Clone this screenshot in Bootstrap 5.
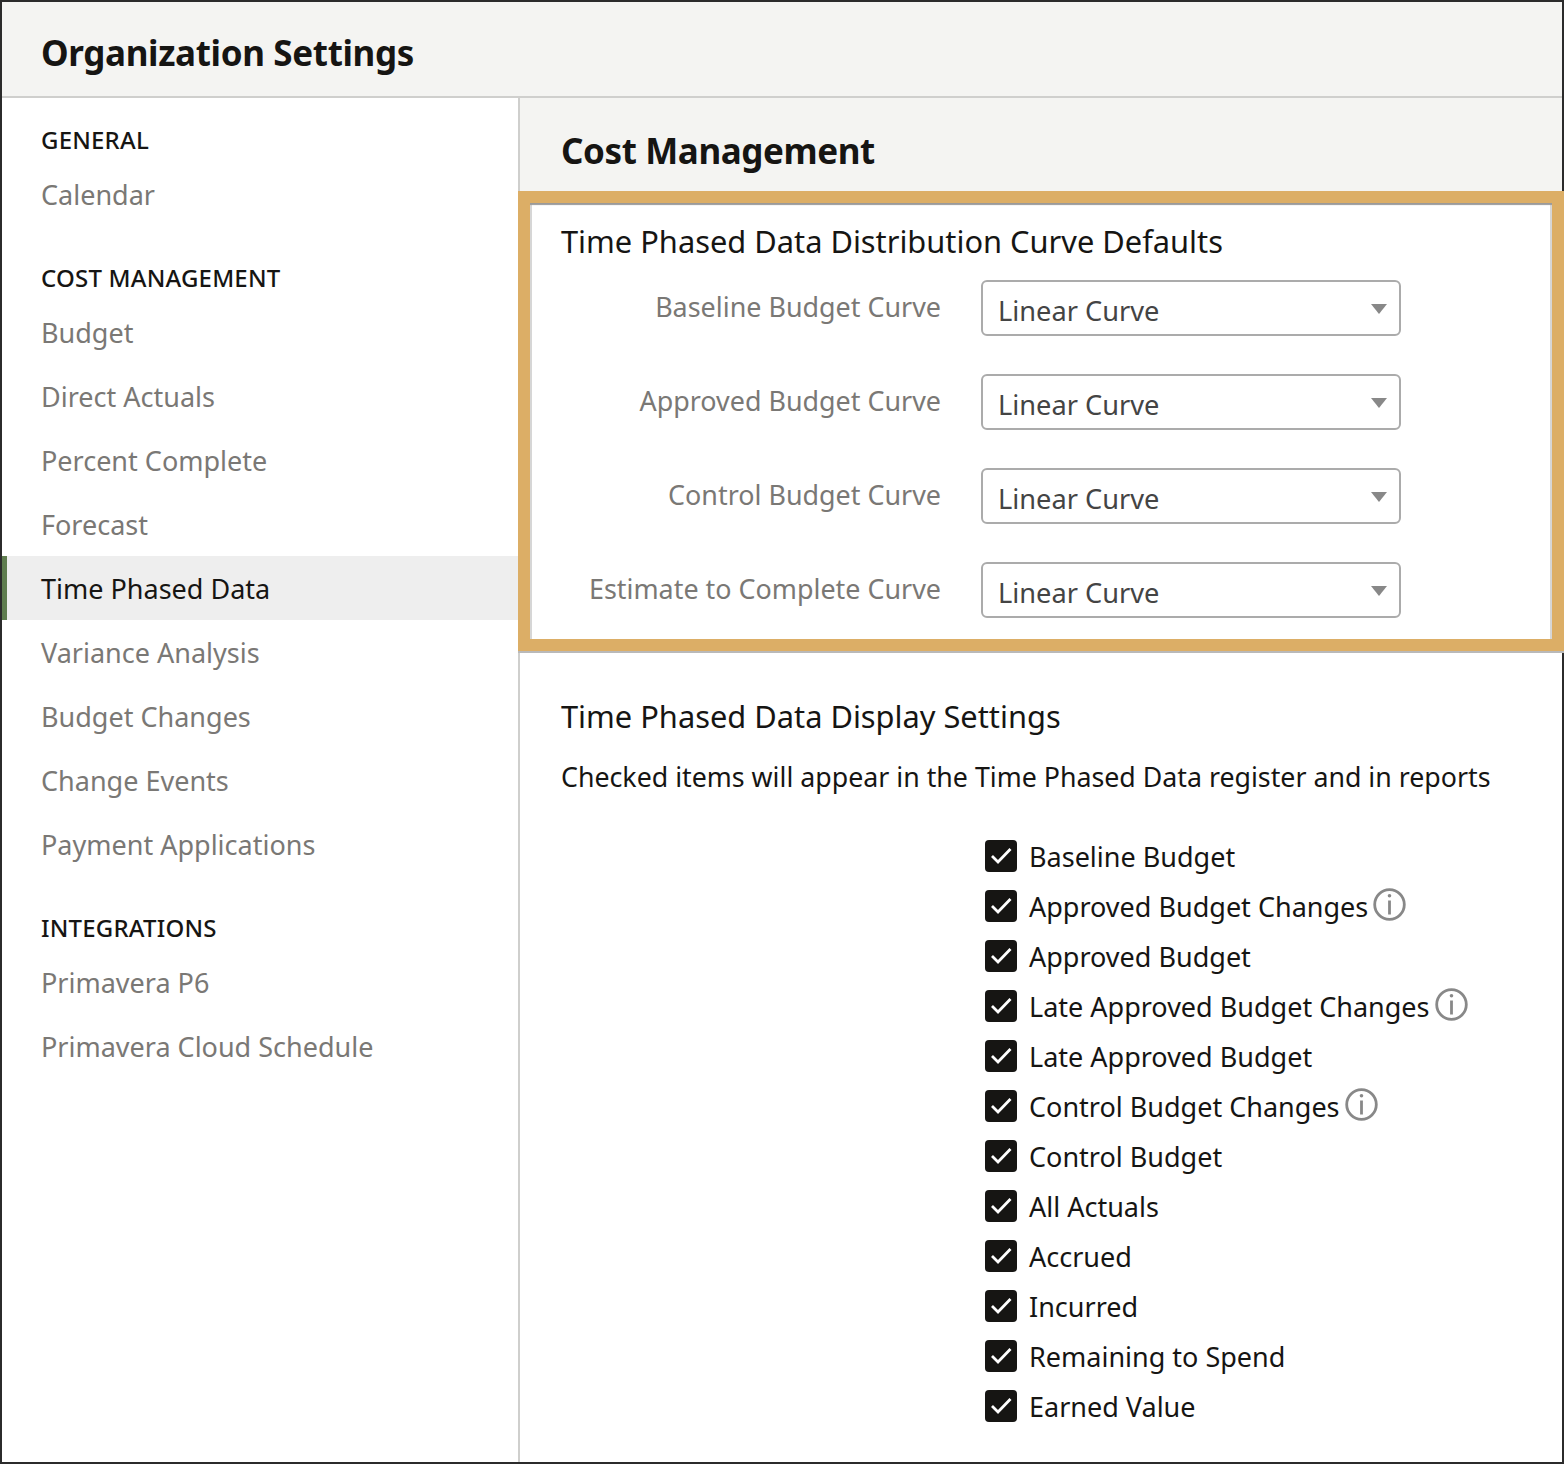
<!DOCTYPE html>
<html>
<head>
    <title>Organization Settings</title>
    <link href="https://cdn.jsdelivr.net/npm/bootstrap@5.3.0/dist/css/bootstrap.min.css" rel="stylesheet">
    <style>
        body { background: #fff; font-family: "Noto Sans", sans-serif; color: #161513; }
        .org-frame { width: 1564px; height: 1464px; border: 2px solid #2b2b2b; }
        .org-header { height: 96px; background: #f4f4f2; border-bottom: 2px solid #cfcfcd; padding: 8px 0 0 39px; }
        .org-title { font-size: 35px; font-weight: 700; letter-spacing: -0.35px; margin: 0; }
        .side-col { width: 516px; padding-top: 26px; }
        .side-label { font-size: 24px; font-weight: 500; letter-spacing: 0.2px; height: 32px; line-height: 32px; padding-left: 39px; margin-bottom: 6px; }
        .side-group { margin-bottom: 36px; }
        .side-link { display: block; height: 64px; line-height: 66px; padding-left: 39px; font-size: 27px; color: #7a7875; text-decoration: none; }
        .side-link.is-active { background: #eeeeee; color: #161513; border-left: 5px solid #5f7d4f; padding-left: 34px; }
        .main-col { border-left: 2px solid #cfcfcd; min-width: 0; }
        .main-head { background: #f4f4f2; height: 93px; padding: 12px 0 0 41px; }
        .main-title { font-size: 35px; font-weight: 700; letter-spacing: -0.4px; margin: 0; }
        .curve-box { margin: 0 -2px; height: 460px; border: 12px solid #dcae66; background: #fff; box-shadow: inset 0 3px 1px -1px #9a9a9a, inset 2px 0 0 #d6d6d6, inset -2px 0 0 #d6d6d6, 0 2px 0 #b9b9b9; padding: 18px 0 0 31px; }
        .sec-title { font-size: 30.8px; line-height: 40px; margin: 0; }
        .curve-rows { margin-top: 19px; gap: 38px; }
        .curve-label { width: 380px; line-height: 54px; text-align: right; font-size: 26.9px; color: #7a7875; margin-right: 40px; }
        .curve-select { width: 420px; height: 56px; border: 2px solid #ababab; border-radius: 6px; font-size: 27.2px; color: #444; padding: 6px 40px 0 15px; background-image: url("data:image/svg+xml,%3Csvg xmlns='http://www.w3.org/2000/svg' viewBox='0 0 16 10'%3E%3Cpath fill='%23888' d='M0 0h16l-8 10z'/%3E%3C/svg%3E"); background-size: 16px 10px; background-position: right 12px top 22px; }
        .display-area { padding: 45px 0 0 41px; }
        .display-note { font-size: 26.75px; line-height: 40px; margin: 21px 0 0; }
        .check-list { margin: 34px 0 0 424px; }
        .check-row { display: flex; align-items: center; height: 50px; margin: 0; padding: 0; min-height: 0; }
        .check-row .form-check-input { float: none; width: 32px; height: 32px; margin: 0 12px 0 0; border: 0; border-radius: 4px; flex: none; }
        .check-row .form-check-input:checked { background-color: #161513; background-size: 32px; background-image: url("data:image/svg+xml,%3Csvg xmlns='http://www.w3.org/2000/svg' viewBox='0 0 32 32'%3E%3Cpath fill='none' stroke='%23fff' stroke-width='2.8' d='M7 16l6 6L25.500 9'/%3E%3C/svg%3E"); opacity: 1; }
        .check-row .form-check-label { font-size: 27px; opacity: 1; position: relative; top: 1px; }
        .info-mark { width: 33px; height: 33px; margin-left: 5px; margin-top: -3px; flex: none; }
    </style>
</head>
<body>
    <div class="org-frame d-flex flex-column">
        <div class="org-header d-flex align-items-center">
            <h1 class="org-title">Organization Settings</h1>
        </div>
        <div class="d-flex flex-grow-1">
            <nav class="side-col flex-shrink-0">
                <div class="side-group">
                    <div class="side-label">GENERAL</div>
                    <a class="side-link" href="#">Calendar</a>
                </div>
                <div class="side-group">
                    <div class="side-label">COST MANAGEMENT</div>
                    <a class="side-link" href="#">Budget</a>
                    <a class="side-link" href="#">Direct Actuals</a>
                    <a class="side-link" href="#">Percent Complete</a>
                    <a class="side-link" href="#">Forecast</a>
                    <a class="side-link is-active" href="#">Time Phased Data</a>
                    <a class="side-link" href="#">Variance Analysis</a>
                    <a class="side-link" href="#">Budget Changes</a>
                    <a class="side-link" href="#">Change Events</a>
                    <a class="side-link" href="#">Payment Applications</a>
                </div>
                <div class="side-group">
                    <div class="side-label">INTEGRATIONS</div>
                    <a class="side-link" href="#">Primavera P6</a>
                    <a class="side-link" href="#">Primavera Cloud Schedule</a>
                </div>
            </nav>
            <main class="main-col flex-grow-1">
                <div class="main-head d-flex align-items-center">
                    <h2 class="main-title">Cost Management</h2>
                </div>
                <section class="curve-box">
                    <h3 class="sec-title fw-normal">Time Phased Data Distribution Curve Defaults</h3>
                    <div class="curve-rows d-flex flex-column" id="curveRows"></div>
                </section>
                <section class="display-area">
                    <h3 class="sec-title fw-normal">Time Phased Data Display Settings</h3>
                    <p class="display-note">Checked items will appear in the Time Phased Data register and in reports</p>
                    <div class="check-list" id="checkRows"></div>
                </section>
            </main>
        </div>
    </div>

    <script src="https://cdn.jsdelivr.net/npm/bootstrap@5.3.0/dist/js/bootstrap.bundle.min.js"></script>
    <script>
        const curves = ['Baseline Budget Curve', 'Approved Budget Curve', 'Control Budget Curve', 'Estimate to Complete Curve'];
        const checks = [
            ['Baseline Budget'], ['Approved Budget Changes', true], ['Approved Budget'],
            ['Late Approved Budget Changes', true], ['Late Approved Budget'], ['Control Budget Changes', true],
            ['Control Budget'], ['All Actuals'], ['Accrued'], ['Incurred'], ['Remaining to Spend'], ['Earned Value']
        ];
        const info = `<svg class="info-mark" viewBox="0 0 33 33" fill="none" stroke="#888" stroke-width="2.8"><circle cx="16.5" cy="16.5" r="14.8"/><path d="M16.5 12.500v14"/><circle cx="16.5" cy="7.800" r="1.800" fill="#888" stroke="none"/></svg>`;

        document.getElementById('curveRows').innerHTML = curves.map(name => `
            <div class="d-flex align-items-start">
                <label class="curve-label">${name}</label>
                <select class="form-select curve-select"><option>Linear Curve</option></select>
            </div>`).join('');

        document.getElementById('checkRows').innerHTML = checks.map(([name, hasInfo], i) => `
            <div class="form-check check-row">
                <input class="form-check-input" type="checkbox" id="chk${i}" checked>
                <label class="form-check-label" for="chk${i}">${name}</label>
                ${hasInfo ? info : ''}
            </div>`).join('');
    </script>
</body>
</html>
